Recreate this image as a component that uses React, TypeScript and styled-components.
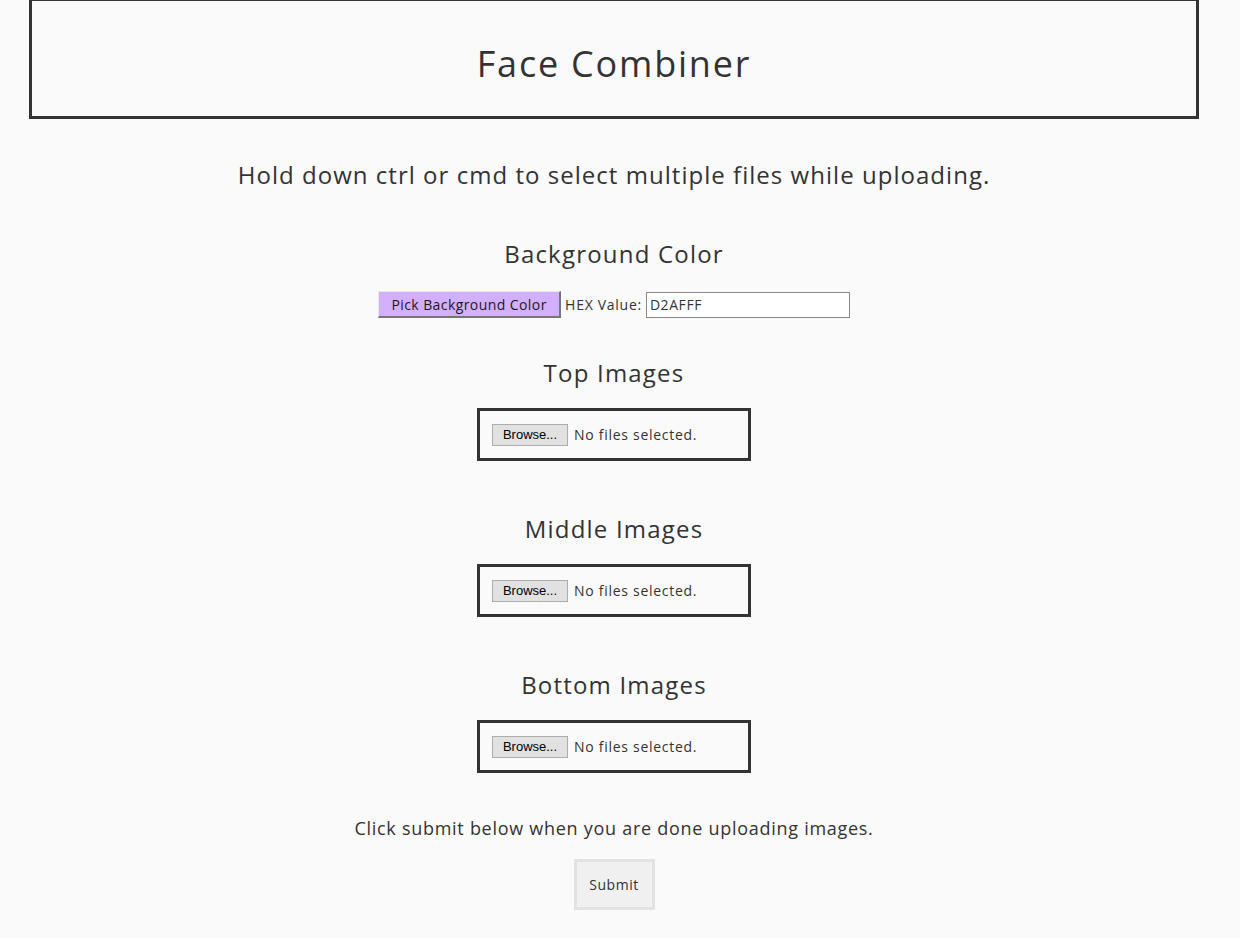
import React from "react";
import styled, { createGlobalStyle } from "styled-components";

const GlobalStyle = createGlobalStyle`
  html, body {
    margin: 0;
    padding: 0;
    background: #fafafa;
  }
  body {
    font-family: "Open Sans", "Liberation Sans", sans-serif;
    color: #333333;
    letter-spacing: 0.045em;
  }
`;

const Page = styled.div`
  width: 1228px;
  min-height: 938px;
  display: flex;
  flex-direction: column;
  align-items: center;
`;

const Header = styled.header`
  align-self: stretch;
  margin: 0 29px;
  height: 119px;
  box-sizing: border-box;
  border: 3px solid #333333;
  border-top-width: 1px;
  display: flex;
  align-items: center;
  justify-content: center;
  padding-top: 10px;
`;

const Title = styled.h1`
  margin: 0;
  font-size: 36px;
  font-weight: 400;
  line-height: 44px;
  letter-spacing: 0.05em;
`;

const Intro = styled.p`
  margin: 41px 0 0;
  font-size: 24px;
  line-height: 30px;
  letter-spacing: 0.043em;
`;

const SectionTitle = styled.h2<{ $gap: number }>`
  margin: ${(p) => p.$gap}px 0 0;
  font-size: 24px;
  font-weight: 400;
  line-height: 30px;
  letter-spacing: 0.05em;
`;

const ColorRow = styled.div`
  margin-top: 22px;
  display: flex;
  align-items: center;
  gap: 4px;
  font-size: 14px;
`;

const PickButton = styled.button`
  box-sizing: border-box;
  width: 183px;
  height: 27px;
  background: #d2afff;
  border-style: solid;
  border-width: 1px 2px 2px 1px;
  border-color: #e8e8e8 #767676 #767676 #e8e8e8;
  font-family: inherit;
  font-size: 14px;
  letter-spacing: 0.03em;
  color: #1a1a1a;
  padding: 0;
`;

const HexLabel = styled.label`
  color: #333333;
`;

const HexInput = styled.input`
  box-sizing: border-box;
  width: 204px;
  height: 26px;
  border: 1px solid #8a8a8a;
  background: #ffffff;
  font-family: inherit;
  font-size: 14px;
  letter-spacing: 0.04em;
  color: #333333;
  padding: 0 3px;
`;

const UploadBox = styled.div`
  box-sizing: border-box;
  width: 274px;
  height: 53px;
  margin-top: 20px;
  border: 3px solid #333333;
  display: flex;
  align-items: center;
  padding-left: 12px;
  gap: 6px;
  font-size: 14px;
`;

const BrowseButton = styled.span`
  box-sizing: border-box;
  width: 76px;
  height: 22px;
  background: #e1e1e1;
  border: 1px solid #adadad;
  font-family: "Liberation Sans", Arial, sans-serif;
  font-size: 13px;
  letter-spacing: 0;
  color: #000000;
  display: flex;
  align-items: center;
  justify-content: center;
`;

const NoFiles = styled.span`
  color: #333333;
`;

const Note = styled.p`
  margin: 43px 0 0;
  font-size: 18px;
  line-height: 24px;
`;

const SubmitButton = styled.button`
  box-sizing: border-box;
  margin-top: 19px;
  width: 81px;
  height: 51px;
  background: #f0f0f0;
  border: 3px solid #e2e2e2;
  font-family: inherit;
  font-size: 14px;
  letter-spacing: 0.04em;
  color: #333333;
`;

const FileField: React.FC = () => (
  <UploadBox>
    <BrowseButton>Browse...</BrowseButton>
    <NoFiles>No files selected.</NoFiles>
  </UploadBox>
);

export default function App() {
  return (
    <>
      <GlobalStyle />
      <Page>
        <Header>
          <Title>Face Combiner</Title>
        </Header>
        <Intro>Hold down ctrl or cmd to select multiple files while uploading.</Intro>
        <SectionTitle $gap={49}>Background Color</SectionTitle>
        <ColorRow>
          <PickButton>Pick Background Color</PickButton>
          <HexLabel>HEX Value:</HexLabel>
          <HexInput defaultValue="D2AFFF" />
        </ColorRow>
        <SectionTitle $gap={40}>Top Images</SectionTitle>
        <FileField />
        <SectionTitle $gap={53}>Middle Images</SectionTitle>
        <FileField />
        <SectionTitle $gap={53}>Bottom Images</SectionTitle>
        <FileField />
        <Note>Click submit below when you are done uploading images.</Note>
        <SubmitButton>Submit</SubmitButton>
      </Page>
    </>
  );
}
